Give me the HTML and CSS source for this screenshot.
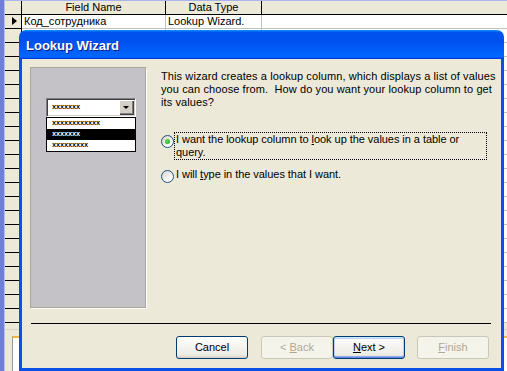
FILE: index.html
```html
<!DOCTYPE html>
<html>
<head>
<meta charset="utf-8">
<title>Lookup Wizard</title>
<link rel="stylesheet" href="styles.css">
</head>
<body>
<div class="app">
  <div class="mdi-edge"></div>
  <div class="design">
    <div class="grid">
      <div class="sel"></div>
      <div class="hd">Field Name</div>
      <div class="hd">Data Type</div>
      <div class="hd last"></div>
      <div class="sel"><span class="arrow"></span></div>
      <div class="cell">Код_сотрудника</div>
      <div class="cell">Lookup Wizard.</div>
      <div class="cell last"></div>
      <div class="sel fill"></div>
      <div class="cell fill"></div>
      <div class="cell fill"></div>
      <div class="cell fill last"></div>
    </div>
    <div class="props">
      <div class="tab"></div>
    </div>
  </div>
</div>

<div class="dialog">
  <div class="titlebar">Lookup Wizard</div>
  <div class="frame">
    <div class="main">
      <div class="panel">
        <div class="combo">
          <span class="xs">xxxxxxx</span>
          <span class="drop"><span class="tri"></span></span>
        </div>
        <div class="list">
          <div class="item"><span class="xs">xxxxxxxxxxxx</span></div>
          <div class="item selected"><span class="xs">xxxxxxx</span></div>
          <div class="item"><span class="xs">xxxxxxxxx</span></div>
        </div>
      </div>
      <div class="content">
        <p class="intro">This wizard creates a lookup column, which displays a list of values<br>you can choose from.&nbsp; How do you want your lookup column to get<br>its values?</p>
        <div class="option first">
          <span class="radio on"></span>
          <span class="label focus">I want the lookup column to <u>l</u>ook up the values in a table or<br>query.</span>
        </div>
        <div class="option">
          <span class="radio"></span>
          <span class="label">I will <u>t</u>ype in the values that I want.</span>
        </div>
      </div>
    </div>
    <div class="separator"></div>
    <div class="buttons">
      <button class="btn cancel">Cancel</button>
      <button class="btn disabled">&lt; <u>B</u>ack</button>
      <button class="btn default"><u>N</u>ext &gt;</button>
      <button class="btn disabled finish"><u>F</u>inish</button>
    </div>
  </div>
</div>
</body>
</html>
```

FILE: styles.css
```css
html, body {
  margin: 0;
  padding: 0;
}

body {
  width: 507px;
  height: 371px;
  overflow: hidden;
  position: relative;
  background: #ece9d8;
  font-family: "Liberation Sans", Arial, sans-serif;
  font-size: 11px;
  color: #000;
}

.app {
  display: flex;
  height: 371px;
}

.mdi-edge {
  width: 4px;
  flex: none;
  background: #6f7fd8;
  border-right: 1px solid #b4bdee;
}

.design {
  flex: 1;
  display: flex;
  flex-direction: column;
}

.grid {
  display: grid;
  grid-template-columns: 17px 144px 96px 1fr;
  grid-template-rows: 14px 14px 294px;
  border-top: 1px solid #a9b4ea;
}

.grid > div {
  box-sizing: border-box;
  border-right: 1px solid #000;
  border-bottom: 1px solid #000;
  line-height: 13px;
  white-space: nowrap;
  overflow: hidden;
}

.sel {
  background: #ece9d8;
  position: relative;
}

.hd {
  background: #ece9d8;
  text-align: center;
}

.cell {
  background: #fff;
  padding-left: 2px;
}

.grid > .cell {
  border-right-color: #c0c0c0;
  border-bottom-color: #c0c0c0;
}

.grid > .last {
  border-right: 0;
}

.grid > .fill {
  border-bottom: 0;
}

.sel.fill {
  background: repeating-linear-gradient(to bottom, #ece9d8 0 13px, #000 13px 14px);
}

.cell.fill {
  background: repeating-linear-gradient(to bottom, #fff 0 13px, #c0c0c0 13px 14px);
}

.arrow {
  position: absolute;
  left: 7px;
  top: 2px;
  width: 0;
  height: 0;
  border-top: 4.5px solid transparent;
  border-bottom: 4.5px solid transparent;
  border-left: 5px solid #000;
}

.props {
  flex: 1;
  margin-top: 6px;
  border-top: 1px solid #d8d4c4;
}

.tab {
  margin: 6px 0 0 7px;
  height: 40px;
  background: #fff;
  border-top: 2px solid #f4b547;
  border-left: 1px solid #919b9c;
}

/* Dialog window */
.dialog {
  position: absolute;
  left: 19px;
  top: 30px;
  width: 485px;
  height: 341px;
  display: flex;
  flex-direction: column;
}

.titlebar {
  height: 29px;
  box-sizing: border-box;
  padding: 3px 0 0 7px;
  border-radius: 7px 7px 0 0;
  background: linear-gradient(to bottom, #0997ff 0, #0053ee 8%, #0050ee 40%, #0066ff 88%, #0066ff 93%, #005bff 95%, #003dd7 96%, #003dd7 100%);
  color: #fff;
  font-weight: bold;
  font-size: 13px;
  line-height: 26px;
  text-shadow: 1px 1px #0f1e8a;
}

.frame {
  flex: 1;
  background: #ece9d8;
  border: 3px solid #0b50e6;
  border-top: 0;
  display: flex;
  flex-direction: column;
}

.main {
  display: flex;
  padding: 8px 0 0 8px;
}

.panel {
  width: 117px;
  height: 242px;
  box-sizing: border-box;
  flex: none;
  border: 1px solid;
  border-color: #aca899 #fff #fff #aca899;
  box-shadow: inset -1px -1px #aca899;
  background: #c5c2c7;
  padding: 30px 0 0 15px;
}

.xs {
  font-family: "Liberation Mono", monospace;
  font-weight: bold;
  font-size: 7px;
  letter-spacing: -0.2px;
  line-height: 11px;
}

.combo {
  width: 90px;
  height: 19px;
  box-sizing: border-box;
  border: 1px solid;
  border-color: #808080 #fff #fff #808080;
  box-shadow: inset 1px 1px #404040, inset -1px -1px #d4d0c8;
  background: #fff;
  display: flex;
  align-items: center;
  justify-content: space-between;
  padding: 0 1px 0 5px;
}

.drop {
  width: 15px;
  height: 15px;
  box-sizing: border-box;
  background: #d4d0c8;
  box-shadow: inset 1px 1px #fff, inset -1px -1px #404040, inset -2px -2px #808080;
  display: flex;
  align-items: center;
  justify-content: center;
}

.tri {
  width: 0;
  height: 0;
  border-left: 3px solid transparent;
  border-right: 3px solid transparent;
  border-top: 3px solid #000;
  margin-left: -1px;
}

.list {
  width: 90px;
  height: 35px;
  box-sizing: border-box;
  border: 1px solid #000;
  background: #fff;
  padding-top: 0;
}

.item {
  height: 11px;
  padding-left: 5px;
  display: flex;
  align-items: center;
}

.item.selected {
  background: #000;
  color: #fff;
}

.content {
  margin: 3px 0 0 14px;
  line-height: 13px;
  white-space: nowrap;
}

.intro {
  margin: 0;
  letter-spacing: 0.1px;
}

.option {
  display: flex;
  align-items: flex-start;
  margin-top: 7px;
}

.option.first {
  margin-top: 23px;
}

.radio {
  width: 13px;
  height: 13px;
  box-sizing: border-box;
  flex: none;
  margin-top: 3px;
  border-radius: 50%;
  border: 1px solid #1c5180;
  background: linear-gradient(135deg, #d6d3ca, #fff 80%);
  position: relative;
}

.radio.on::after {
  content: "";
  position: absolute;
  left: 3px;
  top: 3px;
  width: 5px;
  height: 5px;
  border-radius: 50%;
  background: radial-gradient(circle at 40% 40%, #60dd5c, #21a121);
}

.label {
  border: 1px solid transparent;
  padding: 0 1px;
  letter-spacing: -0.05px;
}

.label.focus {
  box-sizing: border-box;
  width: 313px;
  border: 1px dotted #000;
}

.separator {
  margin: 14px 10px 0 9px;
  height: 1px;
  background: #000;
}

.buttons {
  display: flex;
  justify-content: flex-end;
  padding-right: 12px;
  margin-top: 12px;
}

.btn {
  width: 72px;
  height: 23px;
  box-sizing: border-box;
  padding: 0;
  margin: 0;
  border: 1px solid #003c74;
  border-radius: 3px;
  background: linear-gradient(to bottom, #fff 0, #f5f4f0 45%, #ecebe4 85%, #d6d0c5 100%);
  font-family: "Liberation Sans", Arial, sans-serif;
  font-size: 11px;
  line-height: 21px;
  color: #000;
  text-align: center;
}

.btn.cancel {
  margin-right: 13px;
}

.btn.default {
  box-shadow: inset 0 1px #cee7ff, inset 0 -1px #6982ee, inset 1px 0 #b8d1f5, inset -1px 0 #b8d1f5, inset 0 2px #bcd4f6, inset 0 -2px #89ade4;
}

.btn.finish {
  margin-left: 12px;
}

.btn.disabled {
  border-color: #c9c7ba;
  background: #f5f4ea;
  color: #aca899;
}
```
